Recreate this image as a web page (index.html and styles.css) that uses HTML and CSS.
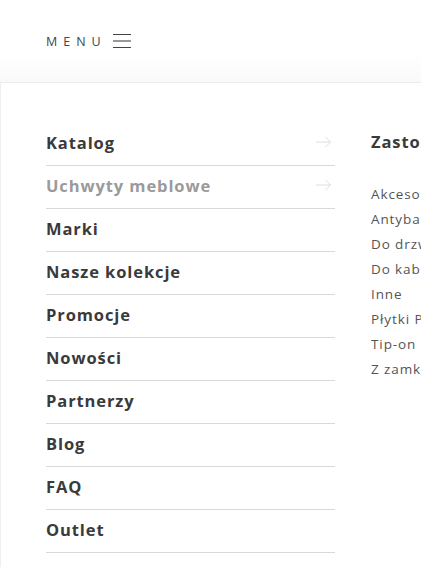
FILE: index.html
```html
<!DOCTYPE html>
<html lang="pl">
<head>
    <meta charset="UTF-8">
    <meta name="viewport" content="width=device-width, initial-scale=1.0">
    <title>Menu</title>
    <link rel="stylesheet" href="styles.css">
</head>
<body>

    <header class="top-bar">
        <button class="menu-toggle">
            <span class="menu-label">MENU</span>
            <span class="burger"><i></i><i></i><i></i></span>
        </button>
    </header>

    <div class="menu-panel">
        <!-- Main navigation -->
        <ul class="main-nav">
            <li>
                <a href="#">Katalog</a>
                <svg class="arrow" width="17" height="12" viewBox="0 0 17 12"><path d="M1 6H15.5M10.5 1L15.5 6L10.5 11" fill="none" stroke="currentColor" stroke-width="1"/></svg>
            </li>
            <li class="active">
                <a href="#">Uchwyty meblowe</a>
                <svg class="arrow" width="17" height="12" viewBox="0 0 17 12"><path d="M1 6H15.5M10.5 1L15.5 6L10.5 11" fill="none" stroke="currentColor" stroke-width="1"/></svg>
            </li>
            <li><a href="#">Marki</a></li>
            <li><a href="#">Nasze kolekcje</a></li>
            <li><a href="#">Promocje</a></li>
            <li><a href="#">Nowości</a></li>
            <li><a href="#">Partnerzy</a></li>
            <li><a href="#">Blog</a></li>
            <li><a href="#">FAQ</a></li>
            <li><a href="#">Outlet</a></li>
        </ul>

        <!-- Submenu -->
        <div class="sub-nav">
            <h3>Zastosowanie</h3>
            <ul>
                <li><a href="#">Akcesoria</a></li>
                <li><a href="#">Antybakteryjne</a></li>
                <li><a href="#">Do drzwi</a></li>
                <li><a href="#">Do kabin</a></li>
                <li><a href="#">Inne</a></li>
                <li><a href="#">Płytki Push</a></li>
                <li><a href="#">Tip-on</a></li>
                <li><a href="#">Z zamkiem</a></li>
            </ul>
        </div>
    </div>

</body>
</html>
```

FILE: styles.css
```css
/* General Styles */
body {
    font-family: 'Open Sans', 'DejaVu Sans', sans-serif;
    margin: 0;
    padding: 0;
    background-color: #fff;
    color: #333;
    overflow: hidden;
    width: 421px;
    height: 567px;
}

a {
    color: inherit;
    text-decoration: none;
}

ul {
    list-style: none;
    margin: 0;
    padding: 0;
}

/* Top bar */
.top-bar {
    height: 83px;
    background: linear-gradient(to bottom, #fff 0%, #fff 65%, #f9f9f9 100%);
    border-bottom: 1px solid #ececec;
    display: flex;
    align-items: center;
    padding-left: 46px;
    box-sizing: border-box;
}

.menu-toggle {
    display: flex;
    align-items: center;
    gap: 6px;
    background: none;
    border: none;
    padding: 0;
    cursor: pointer;
    color: #444;
}

.menu-label {
    font-family: 'Open Sans', sans-serif;
    font-size: 12.5px;
    letter-spacing: 6px;
}

.burger {
    display: flex;
    flex-direction: column;
    gap: 5px;
    width: 18px;
}

.burger i {
    display: block;
    height: 1.5px;
    background-color: #444;
}

.burger i:nth-child(2) {
    background-color: #999;
}

/* Panel */
.menu-panel {
    display: flex;
    border-left: 1px solid #efefef;
    padding: 40px 0 0 45px;
    height: 100%;
}

.main-nav {
    width: 289px;
    flex-shrink: 0;
}

.main-nav li {
    display: flex;
    justify-content: space-between;
    align-items: center;
    height: 43px;
    padding-bottom: 4px;
    box-sizing: border-box;
    border-bottom: 1px solid #d9d9d9;
    font-size: 16.5px;
    font-weight: 700;
    letter-spacing: 0.9px;
    color: #3a3a3a;
}

.main-nav li.active {
    color: #9a9a9a;
}

.main-nav .arrow {
    color: #dedede;
    margin-right: 3px;
}

.sub-nav {
    margin-left: 36px;
    white-space: nowrap;
    flex-shrink: 0;
}

.sub-nav h3 {
    margin: 0;
    height: 43px;
    line-height: 38px;
    font-size: 16.5px;
    font-weight: 700;
    letter-spacing: 0.9px;
    color: #3a3a3a;
}

.sub-nav ul {
    margin-top: 16px;
}

.sub-nav li {
    height: 25px;
    line-height: 25px;
    font-size: 13.5px;
    letter-spacing: 0.9px;
    color: #555;
}
```
